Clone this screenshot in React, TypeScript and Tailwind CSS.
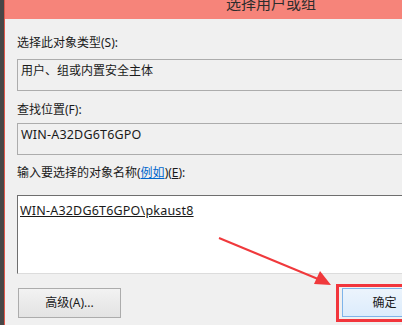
import React from "react";

const font = { fontFamily: '"Noto Sans", "Noto Sans CJK SC", sans-serif' };

export default function App() {
  return (
    <div
      className="relative flex h-[325px] w-[402px] overflow-hidden bg-[#f0f0f0] text-[12px] text-[#1a1a1a]"
      style={font}
    >
      <div className="h-full w-[4px] shrink-0 bg-[#474747]" />
      <div className="flex h-full w-[600px] shrink-0 flex-col border-l border-[#e0594d]">
        <div className="h-[19px] shrink-0 overflow-hidden bg-[#f6847a]">
          <div className="ml-[221px] mt-[-6px] text-[15px] leading-[18px] text-[#2d2d2d]">选择用户或组</div>
        </div>
        <div className="flex flex-col pl-[12px]">
          <div className="mt-[16px] h-[16px] leading-[16px]">选择此对象类型(S):</div>
          <div className="mt-[8px] h-[32px] w-[500px] border border-[#acacac] bg-[#f0f0f0] pl-[3px] pt-[3px] leading-[16px]">
            用户、组或内置安全主体
          </div>
          <div className="mt-[11px] h-[16px] leading-[16px]">查找位置(F):</div>
          <div className="mt-[5px] h-[32px] w-[500px] border border-[#acacac] bg-[#f0f0f0] pl-[3px] pt-[3px] leading-[16px]">
            <span className="text-[12.5px] tracking-[0.2px]">WIN-A32DG6T6GPO</span>
          </div>
          <div className="mt-[10px] h-[16px] leading-[16px]">
            输入要选择的对象名称(<span className="text-[#0066cc] underline">例如</span>)(<span className="underline">E</span>):
          </div>
          <div className="mt-[14px] h-[79px] w-[500px] border-l border-t border-b border-l-[#6e6e6e] border-t-[#6e6e6e] border-b-[#dcdcdc] bg-white pl-[2px] pt-[7px] leading-[16px]">
            <span className="text-[12.5px] tracking-[0.2px] underline">WIN-A32DG6T6GPO\pkaust8</span>
          </div>
          <div className="mt-[14px] flex h-[30px] items-start pl-[1px]">
            <div className="flex h-[30px] w-[103px] items-center justify-center border border-[#acacac] bg-gradient-to-b from-[#f2f2f2] to-[#e3e3e3]">
              高级(A)...
            </div>
            <div className="relative ml-[221px] h-[29px] w-[85px]">
              <div className="flex h-[29px] w-[85px] items-center justify-center border border-[#7eb4ea] bg-gradient-to-b from-[#ecf4fc] to-[#dcecfc]">
                确定
              </div>
              <div className="absolute left-[-6px] top-[-4px] h-[38px] w-[100px] border-[3px] border-[#f2353c]" />
            </div>
          </div>
        </div>
      </div>
      <svg className="pointer-events-none absolute left-0 top-0" width="402" height="325">
        <line x1="219" y1="238" x2="318" y2="279" stroke="#f0393c" strokeWidth="2" />
        <polygon points="331,285 314,284 320,271" fill="#f0393c" />
      </svg>
    </div>
  );
}
